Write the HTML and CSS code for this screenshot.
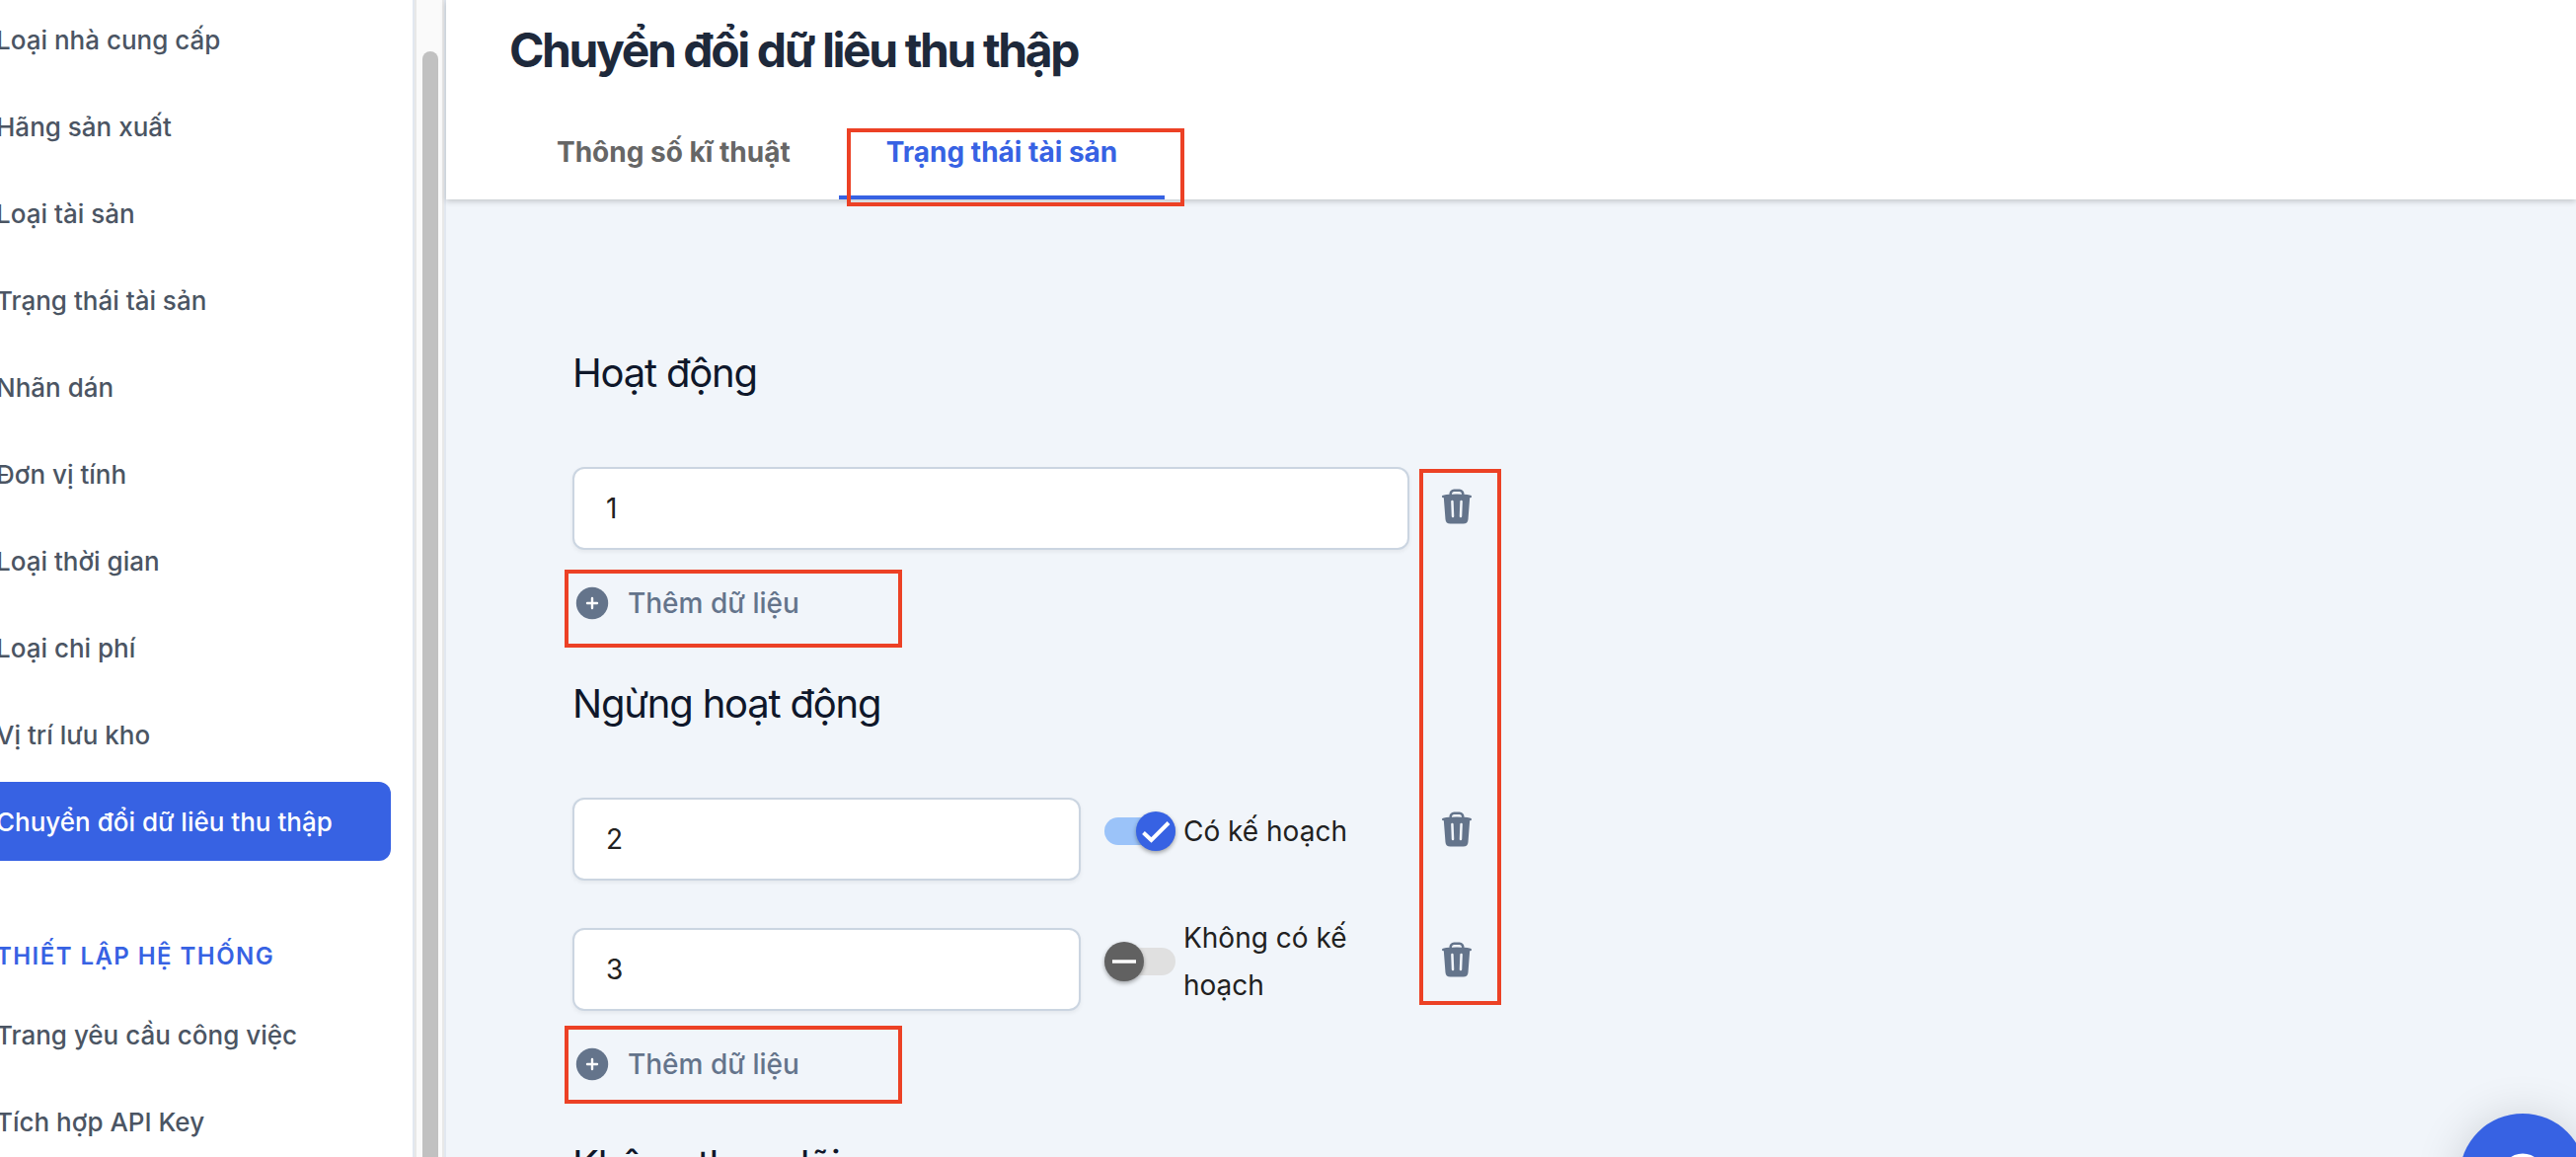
FILE: index.html
```html
<!DOCTYPE html>
<html lang="vi">
<head>
<meta charset="utf-8">
<title>Chuyển đổi dữ liêu thu thập</title>
<link rel="stylesheet" href="styles.css">
</head>
<body>
<svg class="sprite" aria-hidden="true">
  <symbol id="trash" viewBox="0 0 24 24"><path fill-rule="evenodd" d="M16.5 4.478v.227a48.816 48.816 0 013.878.512.75.75 0 11-.256 1.478l-.209-.035-1.005 13.07a3 3 0 01-2.991 2.77H8.084a3 3 0 01-2.991-2.77L4.087 6.66l-.209.035a.75.75 0 01-.256-1.478A48.567 48.567 0 017.5 4.705v-.227c0-1.564 1.213-2.9 2.816-2.951a52.662 52.662 0 013.369 0c1.603.051 2.815 1.387 2.815 2.951zm-6.136-1.452a51.196 51.196 0 013.273 0C14.39 3.05 15 3.684 15 4.478v.113a49.488 49.488 0 00-6 0v-.113c0-.794.609-1.428 1.364-1.452zm-.355 5.945a.75.75 0 10-1.5.058l.347 9a.75.75 0 101.499-.058l-.346-9zm5.48.058a.75.75 0 10-1.498-.058l-.347 9a.75.75 0 001.5.058l.345-9z" clip-rule="evenodd"/></symbol>
  <symbol id="plus" viewBox="0 0 20 20"><circle cx="10" cy="10" r="8.1"/><path d="M10 7.500V12.500M7.500 10H12.500" fill="none" stroke="#fff" stroke-width="1.200" stroke-linecap="round"/></symbol>
</svg>
<div class="app">
  <aside class="sidebar">
    <nav class="menu">
      <a class="menu-item" href="#">Loại nhà cung cấp</a>
      <a class="menu-item" href="#">Hãng sản xuất</a>
      <a class="menu-item" href="#">Loại tài sản</a>
      <a class="menu-item" href="#">Trạng thái tài sản</a>
      <a class="menu-item" href="#">Nhãn dán</a>
      <a class="menu-item" href="#">Đơn vị tính</a>
      <a class="menu-item" href="#">Loại thời gian</a>
      <a class="menu-item" href="#">Loại chi phí</a>
      <a class="menu-item" href="#">Vị trí lưu kho</a>
      <a class="menu-item active" href="#" aria-current="page">Chuyển đổi dữ liêu thu thập</a>
      <h2 class="menu-title">THIẾT LẬP HỆ THỐNG</h2>
      <a class="menu-item" href="#">Trang yêu cầu công việc</a>
      <a class="menu-item" href="#">Tích hợp API Key</a>
    </nav>
    <div class="scrollbar"><div class="scroll-thumb"></div></div>
  </aside>
  <div class="page">
    <header class="header">
      <h1 class="title">Chuyển đổi dữ liêu thu thập</h1>
      <div class="tabs" role="tablist">
        <button class="tab" type="button" role="tab" aria-selected="false">Thông số kĩ thuật</button>
        <button class="tab selected" type="button" role="tab" aria-selected="true">Trạng thái tài sản<span class="mark mark-tab"></span></button>
      </div>
    </header>
    <main class="content">
      <form class="form">
        <section class="group">
          <h2 class="group-title">Hoạt động</h2>
          <div class="rows">
            <div class="row">
              <input class="field" type="text" value="1" aria-label="Hoạt động">
              <button class="remove" type="button" aria-label="Xóa"><svg class="icon"><use href="#trash"/></svg></button>
            </div>
          </div>
          <button class="add" type="button"><svg class="icon"><use href="#plus"/></svg>Thêm dữ liệu<span class="mark mark-add"></span></button>
        </section>
        <section class="group">
          <h2 class="group-title">Ngừng hoạt động</h2>
          <div class="rows">
            <div class="row planned">
              <input class="field" type="text" value="2" aria-label="Ngừng hoạt động">
              <label class="toggle"><span class="switch"><input class="switch-input" type="checkbox" checked><svg class="switch-icon" viewBox="0 0 40 40"><path d="M7.500 21.500L15.500 29L33 11.500" fill="none" stroke="#fff" stroke-width="4"/></svg></span><span>Có kế hoạch</span></label>
              <button class="remove" type="button" aria-label="Xóa"><svg class="icon"><use href="#trash"/></svg></button>
            </div>
            <div class="row planned">
              <input class="field" type="text" value="3" aria-label="Ngừng hoạt động">
              <label class="toggle"><span class="switch"><input class="switch-input" type="checkbox"><svg class="switch-icon off" viewBox="0 0 40 40"><path d="M8 20H32" fill="none" stroke="#fff" stroke-width="3.500"/></svg></span><span>Không có kế hoạch</span></label>
              <button class="remove" type="button" aria-label="Xóa"><svg class="icon"><use href="#trash"/></svg></button>
            </div>
          </div>
          <button class="add" type="button"><svg class="icon"><use href="#plus"/></svg>Thêm dữ liệu<span class="mark mark-add low"></span></button>
        </section>
        <section class="group">
          <h2 class="group-title">Không theo dõi</h2>
        </section>
        <span class="mark mark-remove"></span>
      </form>
    </main>
  </div>
  <button class="chat" type="button" aria-label="Hỗ trợ"><svg class="chat-icon" viewBox="0 0 128 128"><circle cx="64" cy="62" r="18" fill="none" stroke="#fff" stroke-width="7"/></svg></button>
</div>
</body>
</html>
```
FILE: styles.css
```css
* {
  box-sizing: border-box;
}

body {
  margin: 0;
  font-family: Inter, "Noto Sans", sans-serif;
  font-size: 28px;
  line-height: 48px;
  color: #212121;
  background: #f1f5f9;
}

h1,
h2 {
  margin: 0;
}

button {
  padding: 0;
  border: 0;
  background: none;
  font: inherit;
}

.sprite {
  display: none;
}

.app {
  display: flex;
  height: 100vh;
  overflow: hidden;
}

/* Sidebar */
.sidebar {
  display: flex;
  flex: none;
  width: 452px;
  overflow: hidden;
  background: #fff;
  border-right: 2px solid #e2e8f0;
}

.menu {
  display: flex;
  flex: 1;
  flex-direction: column;
  gap: 8px;
  margin-left: -48px;
  padding-right: 22px;
  border-right: 2px solid #e2e8f0;
}

.menu-item {
  flex: none;
  padding: 17px 24px 15px 44px;
  border-radius: 12px;
  color: #4b5563;
  font-size: 26px;
  font-weight: 500;
  text-decoration: none;
  white-space: nowrap;
}

.menu-item.active {
  background: #3762e3;
  color: #fff;
}

.menu-title {
  padding: 65px 0 7px 44px;
  color: #3762e3;
  font-size: 24px;
  font-weight: 600;
  letter-spacing: 0.06em;
  white-space: nowrap;
}

.scrollbar {
  width: 30px;
  padding: 52px 4px 0 6px;
  background: #fafafa;
  border: solid #e8e8e8;
  border-width: 0 2px;
}

.scroll-thumb {
  width: 16px;
  height: 100%;
  border-radius: 8px 8px 0 0;
  background: #c1c1c1;
}

/* Header */
.page {
  display: flex;
  flex: 1;
  flex-direction: column;
  min-width: 0;
  background: #f1f5fa;
}

.header {
  flex: none;
  padding: 23px 64px 0;
  background: #fff;
  box-shadow: 0 2px 6px rgba(0, 0, 0, 0.2);
}

.title {
  color: #1e293b;
  font-size: 48px;
  font-weight: 700;
  line-height: 56px;
  letter-spacing: -0.05em;
}

.tabs {
  display: flex;
  gap: 1px;
  margin-top: 27px;
}

.tab {
  position: relative;
  height: 96px;
  padding: 4px 48px 0;
  border-bottom: 4px solid transparent;
  color: #666;
  font-weight: 700;
}

.tab.selected {
  color: #3762e3;
  border-bottom-color: #3762e3;
}

/* Form */
.content {
  padding: 152px 128px 0;
}

.form {
  position: relative;
  max-width: 916px;
}

.group {
  margin-bottom: 58px;
}

.group-title {
  margin-bottom: 71px;
  color: #0f172a;
  font-size: 40px;
  font-weight: 400;
  letter-spacing: -0.03em;
}

.rows {
  display: flex;
  flex-direction: column;
  gap: 48px;
  margin-bottom: 34px;
}

.row {
  display: flex;
  align-items: center;
}

.field {
  flex: 1;
  min-width: 0;
  height: 84px;
  padding: 0 32px;
  border: 2px solid #cbd5e1;
  border-radius: 12px;
  background: #fff;
  box-shadow: 0 2px 4px rgba(0, 0, 0, 0.06);
  color: #212121;
  font: inherit;
}

.toggle {
  display: flex;
  align-items: center;
  gap: 8px;
  width: 309px;
  margin: -16px 0 0 24px;
  padding-right: 56px;
}

.switch {
  position: relative;
  flex: none;
  width: 72px;
  height: 40px;
}

.switch-input {
  display: block;
  width: 72px;
  height: 28px;
  margin: 6px 0;
  border-radius: 14px;
  background: #e0e0e0;
  appearance: none;
}

.switch-input:checked {
  background: #9bc3f9;
}

.switch-icon {
  position: absolute;
  top: 0;
  right: 0;
  width: 40px;
  height: 40px;
  border-radius: 50%;
  background: #3762e3;
  box-shadow: 0 2px 4px rgba(0, 0, 0, 0.35);
}

.switch-icon.off {
  right: auto;
  left: 0;
  background: #616161;
}

.icon {
  display: block;
  flex: none;
  width: 40px;
  height: 40px;
  fill: #64748b;
}

.remove {
  flex: none;
  margin: -4px 0 0 28px;
}

.planned .remove {
  margin-top: -20px;
}

.add {
  position: relative;
  display: flex;
  align-items: center;
  gap: 16px;
  height: 40px;
  color: #64748b;
  font-weight: 500;
}

/* Red callout frames laid over the controls */
.mark {
  position: absolute;
  border: 4px solid #ec4125;
  pointer-events: none;
}

.mark-tab {
  top: 24px;
  left: 8px;
  width: 342px;
  height: 79px;
}

.mark-add {
  top: -14px;
  left: -8px;
  width: 342px;
  height: 79px;
}

.mark-add.low {
  top: -19px;
}

.mark-remove {
  top: 121px;
  right: -25px;
  width: 83px;
  height: 543px;
}

.chat {
  position: fixed;
  right: -10px;
  bottom: -84px;
  width: 128px;
  height: 128px;
  border-radius: 50%;
  background: #3762e3;
  box-shadow: 0 4px 48px rgba(0, 0, 0, 0.16);
}

.chat-icon {
  display: block;
}
```
